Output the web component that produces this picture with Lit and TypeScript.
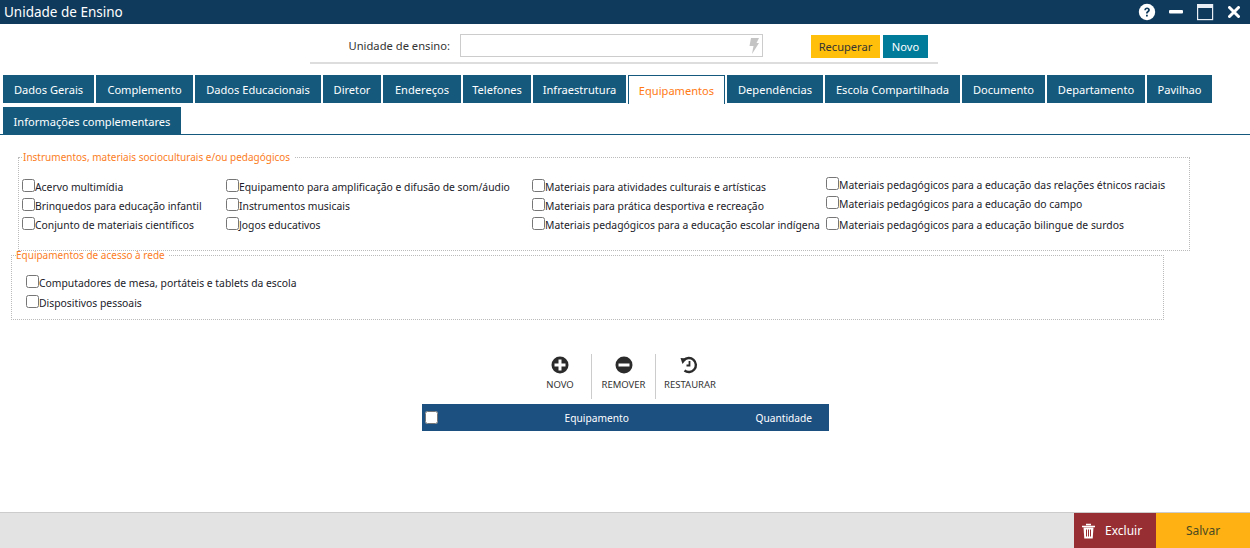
import { LitElement, html, css } from "lit";
import { customElement } from "lit/decorators.js";

const tabsA: [string, number][] = [
  ["Dados Gerais", 91], ["Complemento", 97], ["Dados Educacionais", 126], ["Diretor", 58], ["Endereços", 78],
  ["Telefones", 68], ["Infraestrutura", 93], ["Equipamentos", 97], ["Dependências", 96], ["Escola Compartilhada", 135],
  ["Documento", 83], ["Departamento", 98], ["Pavilhao", 65], ["Informações complementares", 178],
];
const cols = [
  { cls: "c1", items: ["Acervo multimídia", "Brinquedos para educação infantil", "Conjunto de materiais científicos"] },
  { cls: "c2", items: ["Equipamento para amplificação e difusão de som/áudio", "Instrumentos musicais", "Jogos educativos"] },
  { cls: "c3", items: ["Materiais para atividades culturais e artísticas", "Materiais para prática desportiva e recreação", "Materiais pedagógicos para a educação escolar indígena"] },
  { cls: "c4", items: ["Materiais pedagógicos para a educação das relações étnicos raciais", "Materiais pedagógicos para a educação do campo", "Materiais pedagógicos para a educação bilingue de surdos"] },
];

@customElement("app-root")
export class AppRoot extends LitElement {
  static styles = css`
    :host { display: flex; flex-direction: column; width: 1250px; height: 548px; overflow: hidden; background: #fff;
      font-family: "Noto Sans", "Open Sans", sans-serif; font-size: 10.35px; color: #222; }
    .title { height: 24px; background: #0f3a5c; color: #fff; display: flex; align-items: center; padding-left: 4px; font-size: 13.5px; flex: none; }
    .title .t { flex: 1; }
    .title svg { display: block; }
    .win { display: flex; align-items: center; }
    .i-help { margin-right: 13px; }
    .i-min { margin-right: 14px; }
    .i-max { margin-right: 14px; }
    .i-close { margin-right: 10px; }
    .search { height: 38px; margin-left: 310px; width: 628px; border-bottom: 2px solid #ddd; display: flex; align-items: flex-start; flex: none; }
    .search label { width: 140px; text-align: right; margin-top: 14px; font-size: 11.2px; color: #333; line-height: 16px; }
    .inp { width: 298px; height: 21px; border: 1px solid #ccc; margin: 10px 0 0 10px; display: flex; justify-content: flex-end; align-items: center; padding-right: 3px; }
    .btn { height: 23px; margin-top: 11px; font-size: 11.1px; display: flex; align-items: center; justify-content: center; }
    .rec { width: 69px; background: #ffbf0a; color: #333; margin-left: 48px; margin-right: 3px; }
    .nov { width: 45px; background: #007b9a; color: #fff; }
    .tabs { margin-top: 11px; padding-left: 3px; display: flex; flex-wrap: wrap; gap: 3px 2px; border-bottom: 1px solid #15597e; height: 59px; align-content: flex-start; flex: none; width: 1247px; }
    .tab { height: 28px; background: #155a7d; color: #fff; font-size: 11.1px; display: flex; align-items: center; justify-content: center; box-sizing: border-box; }
    .tab.on { background: #fff; color: #ff7a14; border: 1px solid #15597e; border-bottom: 0; height: 29px; }
    fieldset { border: 1px dotted #bbb; margin: 0; padding: 0; min-width: 0; box-sizing: border-box; }
    legend { color: #fb7d1e; padding: 0 4px 0 0; margin-left: 4px; font-size: 10px; line-height: 14px; }
    .f1 { margin: 15px 0 0 18px; width: 1172px; height: 101px; flex: none; }
    .f2 { margin: -3px 0 0 11px; width: 1153px; height: 72px; flex: none; }
    .grid { display: flex; padding-left: 3px; padding-top: 15px; }
    .c1 { width: 204px; } .c2 { width: 306px; } .c3 { width: 294px; } .c4 { margin-top: -2px; }
    .row { height: 19px; display: flex; align-items: flex-start; white-space: nowrap; line-height: 14px; }
    .row input { margin: 0; width: 13px; height: 13px; flex: none; }
    .row span { padding-top: 1px; color: #1c1c2a; }
    .c4 .row:nth-child(2) { height: 21px; }
    .f2 .list { padding: 13px 0 0 14px; }
    .f2 .row { height: 20px; }
    .tools { display: flex; margin: 34px 0 0 529px; height: 45px; flex: none; }
    .tool { display: flex; flex-direction: column; align-items: center; font-size: 9.5px; color: #333; box-sizing: border-box; border-right: 1px solid #ccc; }
    .tool:last-child { border-right: 0; }
    .tool svg { display: block; margin-top: 1px; }
    .tool b { font-weight: 400; margin-top: 3px; line-height: 14px; }
    .w1 { width: 63px; } .w2 { width: 64px; } .w3 { width: 68px; }
    .w3 svg { margin-right: 3px; }
    .tbl { width: 407px; height: 27px; margin: 5px 0 0 422px; background: #1c5081; color: #fff; font-size: 10.2px; display: flex; align-items: center; flex: none; }
    .tbl input { margin: 0 0 0 3px; width: 13px; height: 13px; flex: none; }
    .tbl .e { width: 318px; text-align: center; }
    .tbl .q { flex: 1; text-align: right; padding-right: 17px; }
    .foot { margin-top: auto; height: 35px; background: #e3e3e3; border-top: 1px solid #ccc; display: flex; justify-content: flex-end; flex: none; }
    .ex { width: 82px; background: #962e33; color: #fff; font-size: 12px; display: flex; align-items: center; gap: 9px; padding-left: 7px; box-sizing: border-box; }
    .sv { width: 94px; background: #ffb114; color: #4a4a20; font-size: 12px; display: flex; align-items: center; justify-content: center; }
  `;

  render() {
    return html`
      <div class="title">
        <span class="t">Unidade de Ensino</span>
        <div class="win">
          <svg class="i-help" width="18" height="18" viewBox="0 0 18 18"><circle cx="9" cy="9" r="8.200" fill="#fff"/><path d="M6.300 7.200c0-1.700 1.200-2.700 2.800-2.700s2.800 1 2.800 2.400c0 2.100-2.200 2.100-2.200 3.700H8c0-2.500 2-2.500 2-3.600 0-.6-.4-1-1-1s-1 .4-1.100 1.200zM8 11.700h1.800v1.800H8z" fill="#0f3a5c"/></svg>
          <svg class="i-min" width="14" height="18" viewBox="0 0 14 18"><rect y="7" width="14" height="3.500" rx="1" fill="#fff"/></svg>
          <svg class="i-max" width="17" height="17" viewBox="0 0 17 17"><rect x=".6" y=".6" width="15" height="15" fill="none" stroke="#e8eef4" stroke-width="1.200"/><rect x="1" y="1" width="14" height="3" fill="#e8eef4"/></svg>
          <svg class="i-close" width="12" height="12" viewBox="0 0 12 12"><path d="M1.500 1.500l9 9M10.500 1.500l-9 9" stroke="#fff" stroke-width="3" stroke-linecap="round"/></svg>
        </div>
      </div>
      <div class="search">
        <label>Unidade de ensino:</label>
        <div class="inp"><svg width="11" height="16" viewBox="0 0 11 16"><path d="M3 0h8L8.500 5H11L4 16l1.500-8H1.500z" fill="#c4c4c4"/></svg></div>
        <div class="btn rec">Recuperar</div>
        <div class="btn nov">Novo</div>
      </div>
      <div class="tabs">
        ${tabsA.map(([t, w]) => html`<div class="tab ${t === "Equipamentos" ? "on" : ""}" style="width:${w}px">${t}</div>`)}
      </div>
      <fieldset class="f1">
        <legend>Instrumentos, materiais socioculturais e/ou pedagógicos</legend>
        <div class="grid">
          ${cols.map((c) => html`<div class=${c.cls}>${c.items.map((i) => html`<label class="row"><input type="checkbox" /><span>${i}</span></label>`)}</div>`)}
        </div>
      </fieldset>
      <fieldset class="f2">
        <legend>Equipamentos de acesso à rede</legend>
        <div class="list">
          <label class="row"><input type="checkbox" /><span>Computadores de mesa, portáteis e tablets da escola</span></label>
          <label class="row"><input type="checkbox" /><span>Dispositivos pessoais</span></label>
        </div>
      </fieldset>
      <div class="tools">
        <div class="tool w1"><svg width="18" height="20" viewBox="0 0 18 18"><circle cx="9" cy="9" r="8.500" fill="#2b2b2b"/><path d="M7.500 3.500h3v4h4v3h-4v4h-3v-4h-4v-3h4z" fill="#fff"/></svg><b>NOVO</b></div>
        <div class="tool w2"><svg width="18" height="20" viewBox="0 0 18 18"><circle cx="9" cy="9" r="8.500" fill="#2b2b2b"/><rect x="3.500" y="7.500" width="11" height="3" fill="#fff"/></svg><b>REMOVER</b></div>
        <div class="tool w3"><svg width="18" height="20" viewBox="0 0 18 18"><path d="M3.800 4.200A7 7 0 1 1 4.500 14.500" fill="none" stroke="#2b2b2b" stroke-width="2.400"/><path d="M.5 2l6.500.5L2.500 8z" fill="#2b2b2b"/><path d="M9.500 5v4.500H6.500" fill="none" stroke="#2b2b2b" stroke-width="1.800"/></svg><b>RESTAURAR</b></div>
      </div>
      <div class="tbl"><input type="checkbox" /><span class="e">Equipamento</span><span class="q">Quantidade</span></div>
      <div class="foot">
        <div class="ex"><svg width="15" height="16" viewBox="0 0 15 16"><path d="M5 1.500h5M1 3.500h13" stroke="#fff" stroke-width="1.600" fill="none"/><path d="M2.500 4.500l.8 11h8.400l.8-11z" fill="#fff"/><path d="M5.500 6.500v7M7.500 6.500v7M9.500 6.500v7" stroke="#962e33" stroke-width="1"/></svg>Excluir</div>
        <div class="sv">Salvar</div>
      </div>
    `;
  }
}
